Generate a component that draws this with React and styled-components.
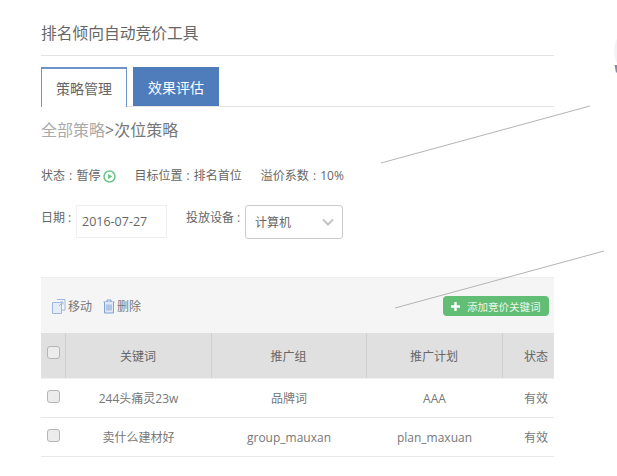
import React from 'react';
import styled, { createGlobalStyle } from 'styled-components';

const GlobalStyle = createGlobalStyle`
  html, body {
    margin: 0;
    background: #fff;
  }
  body {
    font-family: "Open Sans", "Noto Sans CJK SC", sans-serif;
    color: #666;
  }
`;

const Page = styled.div`
  position: relative;
  width: 617px;
  height: 476px;
  overflow: hidden;
  background: #fff;
`;

const Panel = styled.div`
  width: 513px;
  margin-left: 41px;
`;

const Title = styled.h1`
  height: 56px;
  margin: 0;
  padding-top: 22px;
  box-sizing: border-box;
  border-bottom: 1px solid #e3e3e3;
  font-size: 15.75px;
  font-weight: 400;
  line-height: 22px;
  color: #666;
`;

const Tabs = styled.div`
  display: flex;
  gap: 6px;
  height: 40px;
  margin-top: 11px;
  box-sizing: border-box;
  border-bottom: 1px solid #e3e3e3;
`;

const Tab = styled.div`
  width: 86px;
  height: ${(p) => (p.$active ? '40px' : '39px')};
  box-sizing: border-box;
  display: flex;
  align-items: center;
  justify-content: center;
  font-size: 14px;
  background: ${(p) => (p.$active ? '#fff' : '#4f7cba')};
  color: ${(p) => (p.$active ? '#666' : '#fff')};
  border: ${(p) => (p.$active ? '1px solid #6d93c8' : '0')};
  border-top-width: ${(p) => (p.$active ? '2px' : '0')};
  border-bottom: 0;
`;

const Crumb = styled.div`
  margin-top: 11px;
  height: 24px;
  font-size: 16px;
  line-height: 24px;
  color: #777;
`;

const CrumbLink = styled.span`
  color: #aaa;
`;

const Status = styled.div`
  display: flex;
  align-items: center;
  height: 18px;
  margin-top: 25px;
  font-size: 12px;
  line-height: 18px;
  word-spacing: 1px;
  color: #666;
`;

const StatusItem = styled.span`
  display: flex;
  align-items: center;
  white-space: pre;
  margin-right: ${(p) => p.$gap}px;
`;

const PlayIcon = styled.svg`
  width: 13px;
  height: 13px;
  margin-left: 3px;
`;

const FormRow = styled.div`
  display: flex;
  align-items: flex-start;
  margin-top: 20px;
  height: 34px;
`;

const Label = styled.span`
  width: ${(p) => p.$width}px;
  font-size: 12px;
  line-height: 26px;
  color: #666;
`;

const DateInput = styled.div`
  width: 91px;
  height: 33px;
  margin-right: 19px;
  box-sizing: border-box;
  border: 1px solid #eee;
  padding-left: 5px;
  font-size: 12.5px;
  line-height: 31px;
  color: #666;
`;

const Select = styled.div`
  width: 98px;
  height: 34px;
  box-sizing: border-box;
  border: 1px solid #ccc;
  border-radius: 3px;
  display: flex;
  align-items: center;
  justify-content: space-between;
  padding: 0 8px 0 9px;
  font-size: 12px;
  color: #666;
`;

const TableBox = styled.div`
  margin-top: 38px;
  overflow: hidden;
`;

const Toolbar = styled.div`
  height: 56px;
  box-sizing: border-box;
  background: #f5f5f5;
  border-top: 1px solid #eee;
  display: flex;
  align-items: center;
  padding: 1px 5px 0 11px;
`;

const ToolButton = styled.span`
  display: flex;
  align-items: center;
  gap: 2px;
  margin-right: 11px;
  font-size: 12px;
  color: #777;
`;

const AddButton = styled.div`
  margin-left: auto;
  width: 106px;
  height: 20px;
  border-radius: 4px;
  background: #62bd75;
  color: #e8f7eb;
  display: flex;
  align-items: center;
  padding-left: 7px;
  box-sizing: border-box;
  gap: 6px;
  font-size: 10.5px;
`;

const Row = styled.div`
  display: grid;
  grid-template-columns: 25px 146px 155px 136px 51px;
  height: ${(p) => (p.$head ? '46px' : '39px')};
  box-sizing: border-box;
  background: ${(p) => (p.$head ? '#e0e0e0' : '#fff')};
  border-bottom: 1px solid ${(p) => (p.$head ? '#f0f0f0' : '#e8e8e8')};
`;

const Cell = styled.div`
  display: flex;
  align-items: center;
  justify-content: ${(p) => (p.$left ? 'flex-start' : 'center')};
  padding-left: ${(p) => (p.$left ? '21px' : '0')};
  padding-right: ${(p) => (p.$left ? '0' : '1px')};
  font-size: 12px;
  color: ${(p) => (p.$head ? '#666' : '#777')};
  white-space: nowrap;
  border-right: ${(p) => (p.$divider ? '1px solid #cfcfcf' : '0')};
`;

const CheckCell = styled(Cell)`
  justify-content: flex-start;
  padding: 0 0 ${(p) => (p.$head ? '6px' : '4px')} 6px;
  box-sizing: border-box;
`;

const Check = styled.span`
  width: 13px;
  height: 13px;
  box-sizing: border-box;
  border: 1px solid #b5b5b5;
  border-radius: 3px;
  background: #ececec;
`;

const Callout = styled.svg`
  position: absolute;
  left: 0;
  top: 0;
  width: 617px;
  height: 476px;
  pointer-events: none;
`;

const rows = [
  ['244头痛灵23w', '品牌词', 'AAA', '有效'],
  ['卖什么建材好', 'group_mauxan', 'plan_maxuan', '有效'],
];

const App = () => (
  <Page>
    <GlobalStyle />
    <Panel>
      <Title>排名倾向自动竞价工具</Title>
      <Tabs>
        <Tab $active>策略管理</Tab>
        <Tab>效果评估</Tab>
      </Tabs>
      <Crumb>
        <CrumbLink>全部策略</CrumbLink>&gt;次位策略
      </Crumb>
      <Status>
        <StatusItem $gap={18}>
          状态 : 暂停
          <PlayIcon viewBox="0 0 13 13">
            <circle cx="6.5" cy="6.5" r="5.5" fill="none" stroke="#6cc48a" strokeWidth="1.5" />
            <path d="M5 3.8 L9.2 6.5 L5 9.2 Z" fill="#6cc48a" />
          </PlayIcon>
        </StatusItem>
        <StatusItem $gap={19}>目标位置 : 排名首位</StatusItem>
        <StatusItem $gap={0}>溢价系数 : 10%</StatusItem>
      </Status>
      <FormRow>
        <Label $width={35}>日期 :</Label>
        <DateInput>2016-07-27</DateInput>
        <Label $width={59}>投放设备 :</Label>
        <Select>
          计算机
          <svg width="12" height="8" viewBox="0 0 12 8">
            <path d="M1 1.5 L6 6.5 L11 1.5" fill="none" stroke="#c4c4c4" strokeWidth="2" />
          </svg>
        </Select>
      </FormRow>
      <TableBox>
        <Toolbar>
          <ToolButton>
            <svg width="14" height="17" viewBox="0 0 14 17" fill="none" stroke="#9db8dc" strokeWidth="1">
              <path d="M5 1.5 H13 V12 H9.5" />
              <path d="M0.5 4.5 H9.5 V15.5 H0.5 Z" fill="#e4ecf6" />
              <path d="M7 8 L11 4 M8.5 4 H11 V6.5" />
            </svg>
            移动
          </ToolButton>
          <ToolButton>
            <svg width="12" height="15" viewBox="0 0 12 15" fill="none" stroke="#7fa3d3" strokeWidth="1">
              <path d="M0.5 3 H11.5 M4 3 V1 H8 V3" />
              <path d="M1.5 3 V14 H10.5 V3" fill="#dfe8f4" />
              <path d="M4 5.5 V11.5 M6 5.5 V11.5 M8 5.5 V11.5" />
            </svg>
            删除
          </ToolButton>
          <AddButton>
            <svg width="11" height="11" viewBox="0 0 11 11">
              <path d="M5.5 1 V10 M1 5.5 H10" stroke="#fff" strokeWidth="2.4" />
            </svg>
            添加竞价关键词
          </AddButton>
        </Toolbar>
        <Row $head>
          <CheckCell $head $divider><Check /></CheckCell>
          <Cell $head $divider>关键词</Cell>
          <Cell $head $divider>推广组</Cell>
          <Cell $head $divider>推广计划</Cell>
          <Cell $head $left>状态</Cell>
        </Row>
        {rows.map((r) => (
          <Row key={r[0]}>
            <CheckCell><Check /></CheckCell>
            <Cell>{r[0]}</Cell>
            <Cell>{r[1]}</Cell>
            <Cell>{r[2]}</Cell>
            <Cell $left>{r[3]}</Cell>
          </Row>
        ))}
      </TableBox>
    </Panel>
    <Callout viewBox="0 0 617 476">
      <path d="M381 163 L590 106 M395 308 L604 251" stroke="#b4b4b4" strokeWidth="1" fill="none" />
      <circle cx="640" cy="51" r="26" fill="#f3f3f5" />
      <path d="M614.5 65 L617 65 L617 72 L616 73 Z" fill="#8a8aa8" />
    </Callout>
  </Page>
);

export default App;
